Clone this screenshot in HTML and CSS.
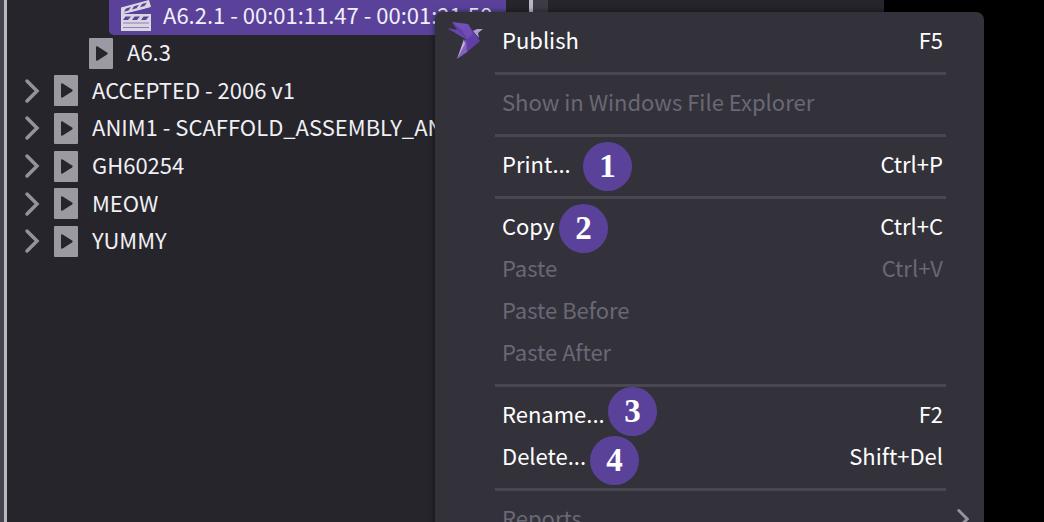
FILE: index.html
```html
<!DOCTYPE html>
<html lang="en">
<head>
<meta charset="utf-8">
<title>Project tree</title>
<link rel="stylesheet" href="styles.css">
</head>
<body>
<svg class="defs" aria-hidden="true">
  <symbol id="chevron" viewBox="0 0 16 26"><path d="M3 3 L13 13 L3 23" fill="none" stroke="currentColor" stroke-width="3.500" stroke-linecap="round"/></symbol>
  <symbol id="play" viewBox="0 0 24 31"><rect width="24" height="31" rx="1" fill="#9b9aa3"/><path d="M7 9.500Q7 7.500 8.700 8.500L18 14.500Q19.500 15.500 18 16.500L8.700 22.500Q7 23.500 7 21.500Z" fill="#26252b"/></symbol>
</svg>
<div class="app">
  <div class="rail"></div>
  <nav class="panel" aria-label="Scenes">
    <div class="tree">
    <button class="row selected" type="button">
      <svg class="clap" viewBox="0 0 32 32"><path d="M1 7.500L29 0L31 7L6 14H31V31H1Z" fill="#d9d6e2"/><path d="M6 8.500L11 7L8.500 10.500L4 11.700ZM14 6.200L19 4.800L16.500 8.200L12 9.500ZM22 4L27 2.500L24.500 6L20 7.200ZM5.500 16.500H11L8 20H3ZM14.500 16.500H20L17 20H12ZM23.500 16.500H29L26 20H21Z" fill="#5a429b"/><path d="M3 14L31 7.500V14Z" fill="#5a429b"/><path d="M3 23H29M3 27.500H29" stroke="#8d80b4" stroke-width="1.200"/></svg>
      <span>A6.2.1 - 00:01:11.47 - 00:01:21.58</span>
    </button>
    <button class="row child" type="button"><svg class="play"><use href="#play"/></svg><span>A6.3</span></button>
    <button class="row" type="button"><svg class="chevron"><use href="#chevron"/></svg><svg class="play"><use href="#play"/></svg><span>ACCEPTED - 2006 v1</span></button>
    <button class="row" type="button"><svg class="chevron"><use href="#chevron"/></svg><svg class="play"><use href="#play"/></svg><span>ANIM1 - SCAFFOLD_ASSEMBLY_ANIM</span></button>
    <button class="row" type="button"><svg class="chevron"><use href="#chevron"/></svg><svg class="play"><use href="#play"/></svg><span>GH60254</span></button>
    <button class="row" type="button"><svg class="chevron"><use href="#chevron"/></svg><svg class="play"><use href="#play"/></svg><span>MEOW</span></button>
    <button class="row" type="button"><svg class="chevron"><use href="#chevron"/></svg><svg class="play"><use href="#play"/></svg><span>YUMMY</span></button>
    </div>
  </nav>
  <div class="rail divider"></div>
  <div class="pane"></div>
  <div class="outside"></div>
</div>
<div class="menu" role="menu">
  <svg class="bird" viewBox="0 0 38 40"><path d="M5 1L21 3L26 13L20 19L12 10Z" fill="#7350b6"/><path d="M0 7L15 10L20 19Z" fill="#6846ad"/><path d="M5 1L16 10L20 19L10 9Z" fill="#6040a5"/><path d="M21 3L33 20L19 32L17 21L20 18L16 11Z" fill="#603da9"/><path d="M21 3L26 13L20 18L16 11Z" fill="#704db5"/><path d="M26 10L30 8L36 8L31 12L32 17Z" fill="#b39bd3"/><path d="M19 18L20 31L10 38Z" fill="#8262bd"/><path d="M17 18L18 23L10 38Z" fill="#c2aadd"/></svg>
  <button class="item" role="menuitem" type="button"><span>Publish</span><kbd>F5</kbd></button>
  <hr>
  <button class="item" role="menuitem" type="button" disabled><span>Show in Windows File Explorer</span></button>
  <hr>
  <button class="item" role="menuitem" type="button"><span>Print...</span><kbd>Ctrl+P</kbd></button>
  <hr>
  <button class="item" role="menuitem" type="button"><span>Copy</span><kbd>Ctrl+C</kbd></button>
  <button class="item" role="menuitem" type="button" disabled><span>Paste</span><kbd>Ctrl+V</kbd></button>
  <button class="item" role="menuitem" type="button" disabled><span>Paste Before</span></button>
  <button class="item" role="menuitem" type="button" disabled><span>Paste After</span></button>
  <hr>
  <button class="item" role="menuitem" type="button"><span>Rename...</span><kbd>F2</kbd></button>
  <button class="item" role="menuitem" type="button"><span>Delete...</span><kbd>Shift+Del</kbd></button>
  <hr>
  <button class="item submenu" role="menuitem" type="button" disabled><span>Reports</span><svg class="arrow"><use href="#chevron"/></svg></button>
  <span class="badge one">1</span>
  <span class="badge two">2</span>
  <span class="badge three">3</span>
  <span class="badge four">4</span>
</div>
</body>
</html>
```
FILE: styles.css
```css
* { box-sizing: border-box; }
body {
  margin: 0;
  height: 100vh;
  position: relative;
  overflow: hidden;
  background: #000;
  color: #f0eff4;
  font: 22px/32px "Noto Sans CJK SC", "Noto Sans", sans-serif;
}
button, kbd { font: inherit; color: inherit; }
button { border: 0; background: none; text-align: left; white-space: nowrap; }
.defs { position: absolute; width: 0; height: 0; }
.app { display: flex; height: 100%; }
.rail { flex: none; width: 7px; background: #45444e; border-right: 3px solid #b9b8c3; }
.divider { width: 19px; background: #3d3c46; border-right: 0; border-left: 4px solid #b9b8c3; }
.panel { flex: none; width: 50%; background: #26252b; }
.tree { height: 263px; margin-top: -3px; display: grid; grid-template-rows: repeat(7, 1fr); }
.row { display: flex; align-items: center; min-width: 0; padding: 0 0 0 17px; overflow: hidden; }
.row span { overflow: hidden; }
.row span, .item span, .item kbd { padding-bottom: 4px; }
.selected { margin: 0 23px 0 102px; padding-left: 11px; background: #5a429b; border-radius: 0 0 5px 5px; color: #f2effa; }
.child { padding-left: 82px; }
.play { flex: none; width: 24px; height: 31px; margin-right: 14px; }
.chevron { flex: none; width: 16px; height: 26px; margin-right: 14px; color: #94939b; }
.clap { flex: none; width: 32px; height: 32px; margin-right: 11px; }
.pane { flex: 1; background: #26252d; }
.outside { flex: none; width: 160px; }
.menu {
  position: absolute;
  top: 12px;
  left: 435px;
  right: 60px;
  padding: 8px 38px 8px 60px;
  background: #33323a;
  border-radius: 8px;
  box-shadow: 0 0 6px #0008;
  color: #fff;
}
.item { display: flex; justify-content: space-between; align-items: center; width: 100%; height: 42px; padding: 0 3px 0 7px; }
.item:disabled { color: #6a6876; }
hr { height: 3px; margin: 10px 0 7px; border: 0; background: #494851; }
.bird { position: absolute; top: 9px; left: 12px; width: 38px; height: 40px; }
.arrow { position: absolute; right: 14px; width: 14px; height: 22px; color: #94939b; }
.badge {
  position: absolute;
  width: 49px;
  height: 49px;
  border-radius: 50%;
  background: #5a429b;
  font: bold 33px/49px "Liberation Serif", serif;
  text-align: center;
}
.one { left: 148px; top: 130px; }
.two { left: 124px; top: 192px; }
.three { left: 173px; top: 375px; }
.four { left: 155px; top: 424px; }
```
